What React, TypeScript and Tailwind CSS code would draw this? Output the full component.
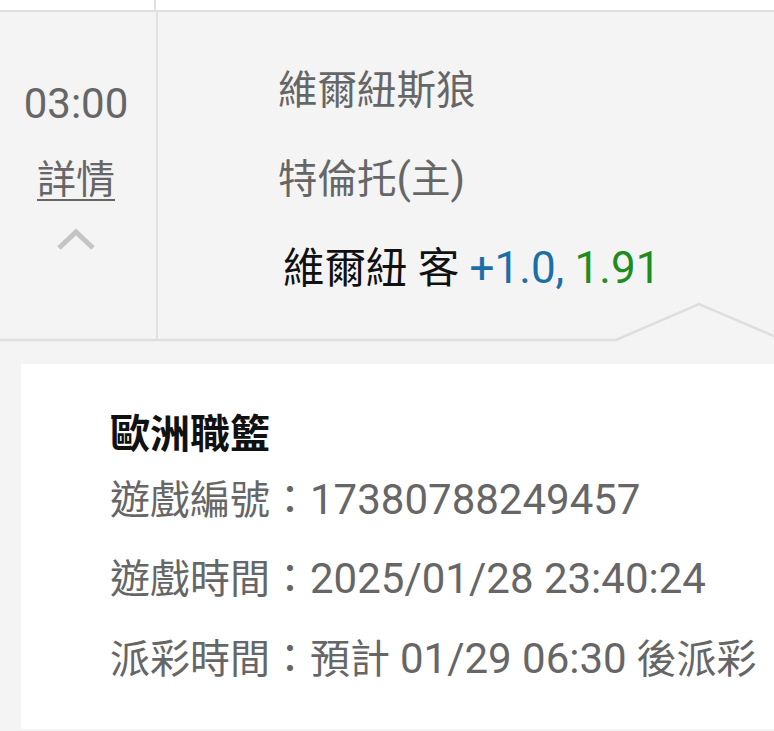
import React from 'react';

const FONT = { fontFamily: 'Roboto, "Noto Sans CJK TC", sans-serif' };

// latin digits render a bit larger than the CJK glyphs on the device
const N: React.FC<{ children: React.ReactNode; className?: string }> = ({ children, className }) => (
  <span className={className ?? 'text-[42px]'}>{children}</span>
);

const App: React.FC = () => {
  return (
    <div className="w-[774px] h-[731px] overflow-hidden bg-[#f4f4f4]" style={FONT}>
      {/* previous row stub */}
      <div className="flex h-[10px] bg-white border-b-2 border-[#e0e0e0] box-content">
        <div className="w-[156px] border-r-2 border-[#e0e0e0]" />
      </div>

      {/* match row */}
      <div className="relative flex h-[328px]">
        <div className="w-[158px] border-r-2 border-[#e0e0e0] flex flex-col items-center">
          <div className="mt-[68px] -ml-[4px] text-[42px] leading-[48px] text-[#666]">03:00</div>
          <div className="mt-[28px] -ml-[4px] text-[39px] leading-[48px] text-[#666] underline underline-offset-[6px] decoration-2">
            詳情
          </div>
          <svg width="40" height="26" viewBox="0 0 40 26" className="mt-[22px] -ml-[4px]">
            <polyline points="3,22 20,6 37,22" fill="none" stroke="#c4c4c4" strokeWidth="5" />
          </svg>
        </div>

        <div className="flex-1 pl-[120px] pt-[35px] flex flex-col">
          <div className="text-[39.5px] leading-[88px] text-[#666]">維爾紐斯狼</div>
          <div className="text-[39.5px] leading-[88px] text-[#666]">
            特倫托<N>(</N>主<N>)</N>
          </div>
          <div className="ml-[5px] text-[41.5px] leading-[88px] text-[#111] whitespace-nowrap">
            維爾紐 客 <N className="text-[44px] text-[#1b6fa8]">+1.0,</N>{' '}
            <N className="text-[44px] text-[#1e8c1e]">1.91</N>
          </div>
        </div>

        <svg
          className="absolute left-0 bottom-[-2px]"
          width="774"
          height="42"
          viewBox="0 0 774 42"
        >
          <polyline
            points="0,40 616,40 699,4 776,37"
            fill="none"
            stroke="#dedede"
            strokeWidth="2.5"
          />
        </svg>
      </div>

      {/* detail card */}
      <div className="mt-[24px] ml-[21px] h-[365px] bg-white pl-[89px] pt-[46px]">
        <div className="text-[40px] leading-[50px] font-bold text-[#111]">歐洲職籃</div>
        <div className="mt-[15px] text-[40px] leading-[50px] text-[#666]">
          遊戲編號：<N>17380788249457</N>
        </div>
        <div className="mt-[28px] text-[40px] leading-[50px] text-[#666]">
          遊戲時間：<N>2025/01/28 23:40:24</N>
        </div>
        <div className="mt-[29px] text-[40px] leading-[50px] text-[#666] whitespace-nowrap">
          派彩時間：預計 <N>01/29 06:30</N> 後派彩
        </div>
      </div>
    </div>
  );
};

export default App;
